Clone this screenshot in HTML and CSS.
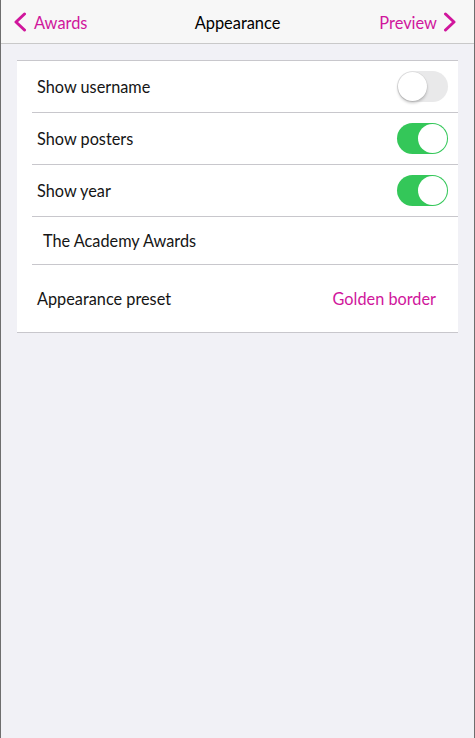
FILE: index.html
```html
<!DOCTYPE html>
<html>
<head>
<meta charset="utf-8">
<link rel="stylesheet" href="styles.css">
</head>
<body>
<div class="screen">
  <header class="navbar">
    <a class="nav-btn nav-left">
      <svg class="chev" width="14" height="20" viewBox="0 0 14 20"><path d="M11.5 2 L3 10 L11.5 18" fill="none" stroke="currentColor" stroke-width="3" stroke-linecap="round" stroke-linejoin="round"/></svg>
      <span>Awards</span>
    </a>
    <div class="nav-title">Appearance</div>
    <a class="nav-btn nav-right">
      <span>Preview</span>
      <svg class="chev" width="14" height="20" viewBox="0 0 14 20"><path d="M2.5 2 L11 10 L2.5 18" fill="none" stroke="currentColor" stroke-width="3" stroke-linecap="round" stroke-linejoin="round"/></svg>
    </a>
  </header>
  <main class="content">
    <section class="card">
      <div class="row row-toggle">
        <span class="label">Show username</span>
        <span class="switch"><span class="knob"></span></span>
      </div>
      <div class="row row-toggle">
        <span class="label">Show posters</span>
        <span class="switch on"><span class="knob"></span></span>
      </div>
      <div class="row row-toggle">
        <span class="label">Show year</span>
        <span class="switch on"><span class="knob"></span></span>
      </div>
      <div class="row row-input">
        <span class="label">The Academy Awards</span>
      </div>
      <div class="row row-detail">
        <span class="label">Appearance preset</span>
        <span class="value">Golden border</span>
      </div>
    </section>
  </main>
</div>
</body>
</html>
```
FILE: styles.css
```css
* { box-sizing: border-box; }
html, body { margin: 0; padding: 0; }
body {
  font-family: "Lato", "Open Sans", sans-serif;
  background: #f1f1f6;
  color: #111;
}
.screen {
  height: 738px;
  border-left: 1px solid #6e6e6e;
  border-right: 1px solid #6e6e6e;
  background: #f1f1f6;
  display: flex;
  flex-direction: column;
}
.navbar {
  height: 44px;
  background: #f7f7f7;
  border-bottom: 1px solid #c9c9c9;
  display: flex;
  align-items: center;
  justify-content: space-between;
  position: relative;
  font-size: 16.4px;
  padding-top: 1px;
}
.nav-btn {
  display: flex;
  align-items: center;
  color: #d0169c;
  gap: 7px;
}
.nav-left { padding-left: 12px; }
.nav-right { padding-right: 17px; gap: 6px; }
.chev { display: block; }
.nav-title {
  position: absolute;
  left: 0; right: 0;
  text-align: center;
  color: #000;
  pointer-events: none;
}
.content { padding: 16px 16px 0; }
.card {
  background: #fff;
  border-top: 1px solid #c8c7cc;
  border-bottom: 1px solid #c8c7cc;
}
.row {
  margin-left: 15px;
  border-bottom: 1px solid #c8c7cc;
  display: flex;
  align-items: center;
  justify-content: space-between;
  padding-left: 5px;
  padding-right: 10px;
  font-size: 16.3px;
  color: #151515;
}
.row-toggle { height: 52px; }
.row-input { height: 48px; padding-left: 11px; }
.row-detail { height: 67px; border-bottom: none; padding-right: 22px; }
.value { color: #d0169c; }
.switch {
  width: 51px;
  height: 31px;
  border-radius: 16px;
  background: #e9e9ea;
  position: relative;
  display: block;
}
.knob {
  position: absolute;
  top: 1px;
  left: 1px;
  width: 29px;
  height: 29px;
  border-radius: 50%;
  background: #fff;
  box-shadow: 0 2px 3px rgba(0,0,0,0.22), 0 0 0 0.5px rgba(0,0,0,0.08);
}
.switch.on { background: #34c759; }
.switch.on .knob {
  left: 21px;
  box-shadow: none;
}
```
